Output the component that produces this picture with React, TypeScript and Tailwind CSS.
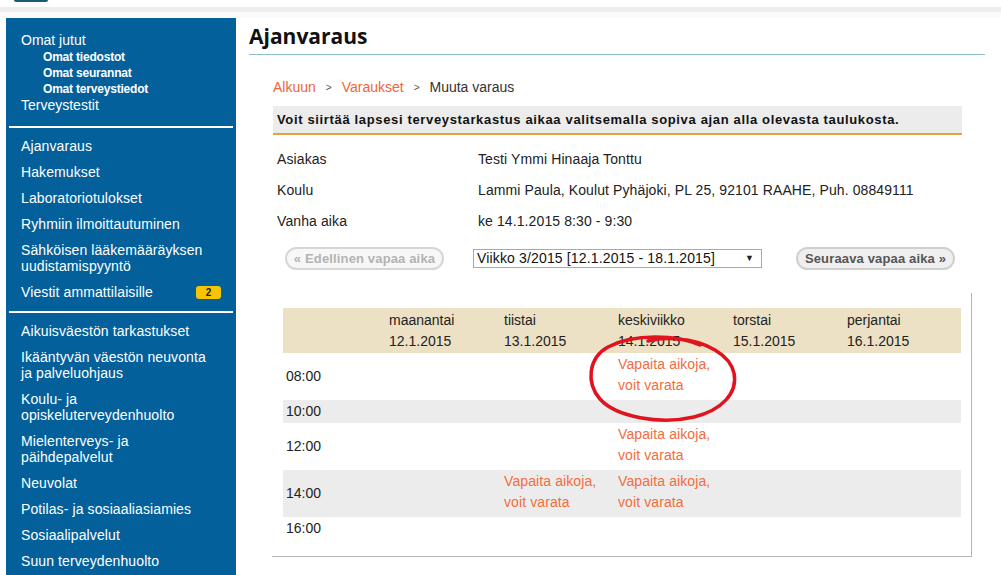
import React from "react";

const font = { fontFamily: '"Liberation Sans", Arial, sans-serif' };

type NavItem = { label: string[]; badge?: string };

const group2: NavItem[] = [
  { label: ["Ajanvaraus"] },
  { label: ["Hakemukset"] },
  { label: ["Laboratoriotulokset"] },
  { label: ["Ryhmiin ilmoittautuminen"] },
  { label: ["Sähköisen lääkemääräyksen", "uudistamispyyntö"] },
  { label: ["Viestit ammattilaisille"], badge: "2" },
];

const group3: NavItem[] = [
  { label: ["Aikuisväestön tarkastukset"] },
  { label: ["Ikääntyvän väestön neuvonta", "ja palveluohjaus"] },
  { label: ["Koulu- ja", "opiskeluterveydenhuolto"] },
  { label: ["Mielenterveys- ja", "päihdepalvelut"] },
  { label: ["Neuvolat"] },
  { label: ["Potilas- ja sosiaaliasiamies"] },
  { label: ["Sosiaalipalvelut"] },
  { label: ["Suun terveydenhuolto"] },
];

function NavRow({ item }: { item: NavItem }) {
  return (
    <div className="flex items-start py-[5px] pl-[15px] pr-[15px]">
      <div className="flex-1 text-[14px] leading-[16px] tracking-[0.1px] text-white">
        {item.label.map((l, i) => (
          <div key={i}>{l}</div>
        ))}
      </div>
      {item.badge && (
        <div className="mt-[2px] mr-0 flex h-[13px] w-[25px] items-center justify-center rounded-[3px] bg-[#f6c500] text-[10px] font-bold leading-none text-[#222]">
          {item.badge}
        </div>
      )}
    </div>
  );
}

const days = [
  ["maanantai", "12.1.2015"],
  ["tiistai", "13.1.2015"],
  ["keskiviikko", "14.1.2015"],
  ["torstai", "15.1.2015"],
  ["perjantai", "16.1.2015"],
];

const rows: { time: string; bg: string; tall: boolean; slots: number[] }[] = [
  { time: "08:00", bg: "bg-white", tall: true, slots: [2] },
  { time: "10:00", bg: "bg-[#ececec]", tall: false, slots: [] },
  { time: "12:00", bg: "bg-white", tall: true, slots: [2] },
  { time: "14:00", bg: "bg-[#ececec]", tall: true, slots: [1, 2] },
  { time: "16:00", bg: "bg-white", tall: false, slots: [] },
];

const gridCols = "grid grid-cols-[106px_115px_114px_115px_114px_114px]";

export default function App() {
  return (
    <div className="h-[575px] w-[1001px] overflow-hidden bg-white text-[#222]" style={font}>
      {/* top strip */}
      <div className="h-[7px] pl-[14px]">
        <div className="h-[2px] w-[34px] rounded-b-[3px] bg-[#1d5b74]" />
      </div>
      <div className="h-[5px] bg-[#ededed]" />
      <div className="h-[6px] bg-[#fafafa]" />

      <div className="flex">
        {/* sidebar */}
        <div className="ml-[6px] h-[560px] w-[230px] shrink-0 bg-[#03609a]">
          <div className="pt-[14px] pl-[15px] text-white">
            <div className="text-[14px] leading-[17px]">Omat jutut</div>
            <div className="pl-[22px] text-[12px] font-bold leading-[16px] tracking-[-0.2px]">
              <div>Omat tiedostot</div>
              <div>Omat seurannat</div>
              <div>Omat terveystiedot</div>
            </div>
            <div className="text-[14px] leading-[17px]">Terveystestit</div>
          </div>
          <div className="mx-[3px] mt-[12px] h-[2px] bg-white" />
          <div className="mt-[5px]">
            {group2.map((it, i) => (
              <NavRow key={i} item={it} />
            ))}
          </div>
          <div className="mx-[3px] mt-[6px] h-[2px] bg-white" />
          <div className="mt-[5px]">
            {group3.map((it, i) => (
              <NavRow key={i} item={it} />
            ))}
          </div>
        </div>

        {/* main */}
        <div className="ml-[13px] w-[736px]">
          <div className="flex h-[37px] items-center border-b border-[#8fbec6]">
            <h1
              className="text-[21px] font-bold leading-none text-[#111]"
              style={{ fontFamily: '"Open Sans", "Liberation Sans", sans-serif' }}
            >
              Ajanvaraus
            </h1>
          </div>

          <div className="w-[713px] pl-[24px]">
            {/* breadcrumb */}
            <div className="mt-[22px] flex h-[20px] items-center text-[14px]">
              <span className="text-[#f0653a]">Alkuun</span>
              <span className="mx-[10px] text-[10px] text-[#555]">&gt;</span>
              <span className="text-[#f0653a]">Varaukset</span>
              <span className="mx-[10px] text-[10px] text-[#555]">&gt;</span>
              <span className="text-[#333]">Muuta varaus</span>
            </div>

            {/* info bar */}
            <div className="mt-[9px] flex h-[29px] w-[689px] items-center border-b-2 border-[#e8a23c] bg-[#ececec] pl-[4px] text-[13px] font-bold tracking-[0.65px] text-[#111]">
              Voit siirtää lapsesi terveystarkastus aikaa valitsemalla sopiva ajan alla olevasta taulukosta.
            </div>

            {/* details */}
            <div className="mt-[9px] text-[14px] tracking-[0.1px] text-[#222]">
              {[
                ["Asiakas", "Testi Ymmi Hinaaja Tonttu"],
                ["Koulu", "Lammi Paula, Koulut Pyhäjoki, PL 25, 92101 RAAHE, Puh. 08849111"],
                ["Vanha aika", "ke 14.1.2015 8:30 - 9:30"],
              ].map(([k, v]) => (
                <div key={k} className="flex h-[31px] items-center">
                  <div className="w-[205px] pl-[4px]">{k}</div>
                  <div>{v}</div>
                </div>
              ))}
            </div>

            {/* controls */}
            <div className="mt-[10px] flex h-[23px] items-center">
              <div className="ml-[12px] flex h-[23px] w-[159px] items-center justify-center rounded-full border-2 border-[#d6d6d6] bg-[#f7f7f7] text-[13px] font-bold tracking-[0.15px] text-[#b3b3b3]">
                « Edellinen vapaa aika
              </div>
              <div className="ml-[29px] flex h-[19px] w-[289px] items-center border border-[#a9a9a9] bg-white pl-[3px] pr-[7px] text-[14px] tracking-[0.15px] text-[#111]">
                <span className="flex-1">Viikko 3/2015 [12.1.2015 - 18.1.2015]</span>
                <span className="text-[9px] text-[#222]">▼</span>
              </div>
              <div className="ml-[34px] flex h-[23px] w-[159px] items-center justify-center rounded-full border-2 border-[#cfcfcf] bg-[#efefef] text-[13px] font-bold tracking-[0.15px] text-[#555]">
                Seuraava vapaa aika »
              </div>
            </div>

            {/* table box */}
            <div className="relative ml-[-1px] mt-[23px] w-[700px] border-r border-b border-[#b3b3b3] pt-[15px] pb-[16px] pl-[11px]">
              <div className="w-[678px]">
                <div className={`${gridCols} h-[45px] bg-[#ede1c5] pt-[2px] text-[14px] leading-[21px] text-[#222]`}>
                  <div />
                  {days.map(([d, date]) => (
                    <div key={d}>
                      <div>{d}</div>
                      <div>{date}</div>
                    </div>
                  ))}
                </div>
                {rows.map((r) => (
                  <div
                    key={r.time}
                    className={`${gridCols} ${r.bg} ${r.tall ? "h-[47px]" : "h-[23px]"} text-[14px] leading-[21px]`}
                  >
                    <div className="flex items-center pl-[3px] text-[#222]">{r.time}</div>
                    {[0, 1, 2, 3, 4].map((c) => (
                      <div key={c} className="pt-[1px] tracking-[0.1px] text-[#f26c3d]">
                        {r.slots.includes(c) && (
                          <>
                            <div>Vapaita aikoja,</div>
                            <div>voit varata</div>
                          </>
                        )}
                      </div>
                    ))}
                  </div>
                ))}
              </div>

              {/* hand drawn red circle */}
              <svg
                className="pointer-events-none absolute left-[310px] top-[40px]"
                width="160"
                height="95"
                viewBox="0 0 160 95"
              >
                <path
                  d="M 118 12 C 96 2, 52 0, 26 14 C 6 25, 4 50, 18 66 C 34 84, 78 92, 112 84 C 140 77, 156 60, 152 40 C 148 22, 124 8, 96 6 C 84 5, 74 6, 66 8"
                  fill="none"
                  stroke="#e0141e"
                  strokeWidth="3.5"
                  strokeLinecap="round"
                />
              </svg>
            </div>
          </div>
        </div>
      </div>
    </div>
  );
}
